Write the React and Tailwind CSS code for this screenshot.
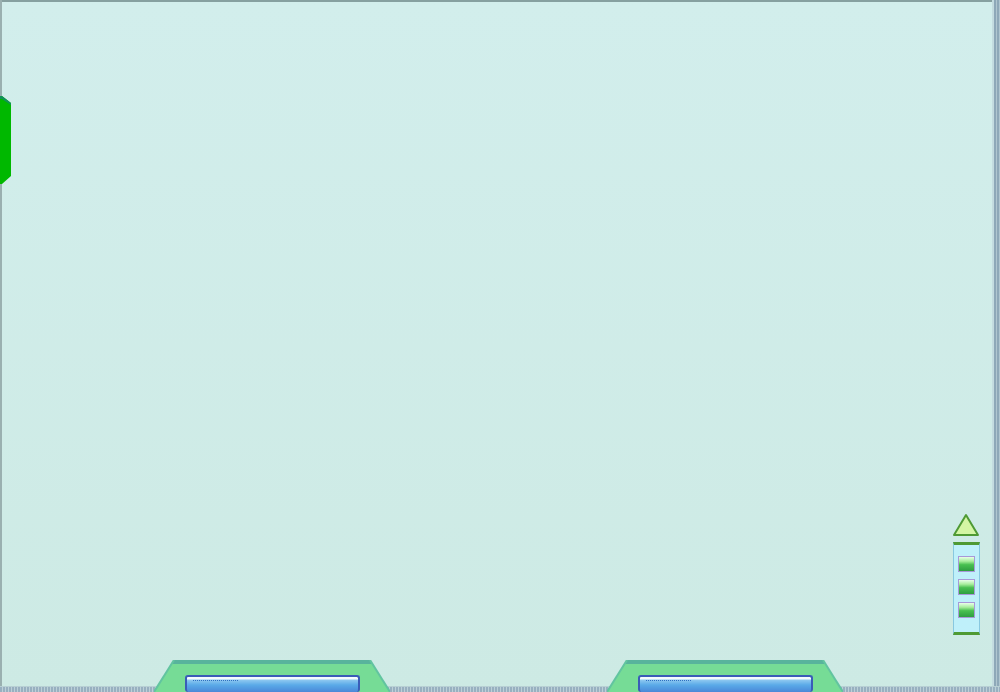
import React from "react";

function Trap({ left }) {
  return (
    <div className="absolute bottom-0 h-[32px] w-[236px]" style={{ left }}>
      <svg width="236" height="32" className="absolute inset-0">
        <polygon points="0,32 20,0 216,0 236,32" fill="#76dc96" />
        <polygon points="20,0 216,0 218,4 18,4" fill="#58b49c" />
        <line x1="0" y1="32" x2="20" y2="0" stroke="#62c4a0" strokeWidth="2" />
        <line x1="236" y1="32" x2="216" y2="0" stroke="#62c4a0" strokeWidth="2" />
      </svg>
      <div className="absolute left-[31px] top-[15px] h-[17px] w-[175px] rounded-[3px] border-2 border-b-0 border-[#3a5cb8] bg-[linear-gradient(#f4fbff_0,#f4fbff_2px,#8ec8f0_3px,#5aaae8_8px,#4a88d8_100%)]">
        <div className="ml-[6px] mt-[3px] h-[1px] w-[45px] border-t border-dotted border-[#2f6fc0]" />
      </div>
    </div>
  );
}

function Square() {
  return (
    <div className="h-[16px] w-[17px] border border-[#a898d8] bg-[linear-gradient(#e8ffe8_0,#a8ee9c_30%,#48c050_55%,#2e9e40_100%)]" />
  );
}

export default function App() {
  return (
    <div className="relative h-[692px] w-[1000px] overflow-hidden bg-[linear-gradient(#d2eeec,#cdeae4)] font-['Liberation_Sans',sans-serif]">
      {/* frame */}
      <div className="absolute inset-x-0 top-0 h-[2px] bg-[#86a0a0]" />
      <div className="absolute inset-y-0 left-0 w-[2px] bg-[#9ab0b0]" />
      <div className="absolute inset-y-0 right-0 w-[8px] border-l-2 border-[#c4dce0] bg-[repeating-linear-gradient(90deg,#8ea8b8_0,#8ea8b8_2px,#b0c6d0_2px,#b0c6d0_3px)]" />
      <div className="absolute inset-x-0 bottom-0 h-[6px] border-t border-[#b8d0d4] bg-[repeating-linear-gradient(90deg,#98b0c0_0,#98b0c0_2px,#bcd0d8_2px,#bcd0d8_3px)]" />

      {/* left tab */}
      <svg width="12" height="90" className="absolute left-0 top-[96px]">
        <polygon points="0,0 2,0 11,7 11,80 2,88 0,88" fill="#00b800" />
        <polygon points="0,0 2,0 11,7 11,9 2,3 0,3" fill="#12905a" />
      </svg>

      {/* right widget */}
      <div className="absolute left-[952px] top-[513px] flex w-[28px] flex-col items-center">
        <svg width="28" height="24">
          <polygon points="14,2 26,22 2,22" fill="#d4f6a4" stroke="#4f9a34" strokeWidth="2" strokeLinejoin="round" />
        </svg>
        <div className="mt-[5px] flex h-[93px] w-[27px] flex-col items-center gap-[7px] border-x border-y-[3px] border-x-[#88c8e0] border-y-[#4f9a34] bg-[#bff0fa] pt-[11px]">
          <Square />
          <Square />
          <Square />
        </div>
      </div>

      <Trap left={154} />
      <Trap left={607} />
    </div>
  );
}
